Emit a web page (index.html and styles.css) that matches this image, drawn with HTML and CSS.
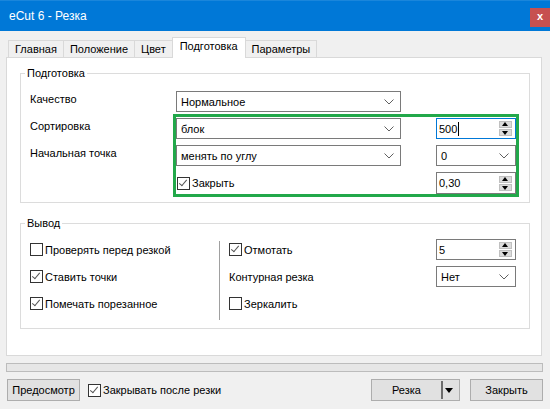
FILE: index.html
```html
<!DOCTYPE html>
<html lang="ru">
<head>
    <meta charset="UTF-8">
    <meta name="viewport" content="width=device-width, initial-scale=1.0">
    <title>eCut 6 - Резка</title>
    <link rel="stylesheet" href="styles.css">
</head>

<body>
    <div class="window">
        <div class="titlebar">
            <span class="title">eCut 6 - Резка</span>
            <div class="close">x</div>
        </div>

        <div class="content">
            <div class="tabs">
                <div class="tab">Главная</div>
                <div class="tab">Положение</div>
                <div class="tab">Цвет</div>
                <div class="tab active">Подготовка</div>
                <div class="tab">Параметры</div>
            </div>

            <div class="panel">
                <fieldset class="group prep">
                    <legend>Подготовка</legend>
                    <div class="prep-grid">
                        <div class="label">Качество</div>
                        <div class="combo wide"><span>Нормальное</span><svg class="chev" width="10" height="6" viewBox="0 0 10 6"><polyline points="0.5,0.5 5,5 9.5,0.5" fill="none" stroke="#606060" stroke-width="1"/></svg></div>
                        <div></div>

                        <div class="label">Сортировка</div>
                        <div class="combo wide"><span>блок</span><svg class="chev" width="10" height="6" viewBox="0 0 10 6"><polyline points="0.5,0.5 5,5 9.5,0.5" fill="none" stroke="#606060" stroke-width="1"/></svg></div>
                        <div class="spin focus"><span>500<i class="caret"></i></span><div class="spin-btns"><div class="up"></div><div class="down"></div></div></div>

                        <div class="label">Начальная точка</div>
                        <div class="combo wide"><span>менять по углу</span><svg class="chev" width="10" height="6" viewBox="0 0 10 6"><polyline points="0.5,0.5 5,5 9.5,0.5" fill="none" stroke="#606060" stroke-width="1"/></svg></div>
                        <div class="combo small"><span>0</span><svg class="chev" width="10" height="6" viewBox="0 0 10 6"><polyline points="0.5,0.5 5,5 9.5,0.5" fill="none" stroke="#606060" stroke-width="1"/></svg></div>

                        <div></div>
                        <label class="check"><span class="box on"></span>Закрыть</label>
                        <div class="spin"><span>0,30</span><div class="spin-btns"><div class="up"></div><div class="down"></div></div></div>
                    </div>
                    <div class="highlight"></div>
                </fieldset>

                <fieldset class="group output">
                    <legend>Вывод</legend>
                    <div class="out-cols">
                        <div class="col-left">
                            <label class="check"><span class="box"></span>Проверять перед резкой</label>
                            <label class="check"><span class="box on"></span>Ставить точки</label>
                            <label class="check"><span class="box on"></span>Помечать порезанное</label>
                        </div>
                        <div class="sep"></div>
                        <div class="col-right">
                            <div class="out-row">
                                <label class="check"><span class="box on"></span>Отмотать</label>
                                <div class="spin"><span>5</span><div class="spin-btns"><div class="up"></div><div class="down"></div></div></div>
                            </div>
                            <div class="out-row">
                                <div class="label">Контурная резка</div>
                                <div class="combo small"><span>Нет</span><svg class="chev" width="10" height="6" viewBox="0 0 10 6"><polyline points="0.5,0.5 5,5 9.5,0.5" fill="none" stroke="#606060" stroke-width="1"/></svg></div>
                            </div>
                            <div class="out-row">
                                <label class="check"><span class="box"></span>Зеркалить</label>
                            </div>
                        </div>
                    </div>
                </fieldset>
            </div>

            <div class="progress"></div>

            <div class="footer">
                <button class="btn preview">Предосмотр</button>
                <label class="check"><span class="box on"></span>Закрывать после резки</label>
                <div class="footer-right">
                    <button class="btn split"><span class="split-text">Резка</span><span class="split-line"></span><span class="split-arrow"></span></button>
                    <button class="btn close-btn">Закрыть</button>
                </div>
            </div>
        </div>
    </div>
</body>
</html>
```

FILE: styles.css
```css
*, *:before, *:after {
    box-sizing: border-box;
}

body {
    margin: 0;
    background-color: #f0f0f0;
    font-family: "Liberation Sans", Arial, sans-serif;
    font-size: 11px;
    color: #000;
}

.window {
    width: 550px;
    height: 409px;
    overflow: hidden;
}

.titlebar {
    height: 31px;
    background-color: #0078d7;
    border-top: 1px solid #1a86db;
    display: flex;
    align-items: flex-start;
    color: #fff;
}

.title {
    margin: 7px 0 0 9px;
    font-size: 12px;
    line-height: 16px;
}

.close {
    margin: 7px 0 0 auto;
    width: 20px;
    height: 19px;
    background-color: #c75050;
    color: #fff;
    font-weight: bold;
    font-size: 11px;
    line-height: 17px;
    text-align: center;
}

.content {
    padding: 0 8px 0 6px;
}

/* tabs */
.tabs {
    display: flex;
    align-items: flex-end;
    height: 26px;
    padding-left: 2px;
    position: relative;
    z-index: 1;
}

.tab {
    height: 17px;
    padding: 0 6px;
    border: 1px solid #d9d9d9;
    border-bottom: none;
    border-right: none;
    line-height: 17px;
    background-color: #f0f0f0;
}

.tab:last-child {
    border-right: 1px solid #d9d9d9;
}

.tab.active {
    height: 21px;
    margin-bottom: -1px;
    background-color: #fff;
    border-right: 1px solid #d9d9d9;
    line-height: 17px;
    padding: 0 7px;
}

.tab.active + .tab {
    border-left: none;
}

.panel {
    height: 299px;
    background-color: #fff;
    border: 1px solid #d9d9d9;
    padding: 8px 11px 0 13px;
}

/* groups */
.group {
    position: relative;
    margin: 0;
    border: 1px solid #dcdcdc;
    padding: 11px 13px 9px 9px;
}

.group legend {
    padding: 0 2px;
    margin-left: -5px;
    line-height: 14px;
}

.output {
    margin-top: 13px;
    padding: 9px 13px 8px 9px;
}

.prep-grid {
    display: grid;
    grid-template-columns: 111px 225px 80px;
    grid-auto-rows: 21px;
    column-gap: 35px;
    row-gap: 6px;
}

.prep-grid > :nth-last-child(-n+3) {
    height: 22px;
}

.label {
    display: flex;
    align-items: center;
    height: 21px;
    white-space: nowrap;
}

.prep-grid .label {
    align-items: flex-start;
    padding-top: 2px;
}

.combo {
    height: 21px;
    border: 1px solid #7a7a7a;
    background-color: #fff;
    display: flex;
    align-items: center;
    justify-content: space-between;
    padding: 0 6px 0 4px;
}

.combo.small {
    width: 80px;
}

.spin {
    height: 21px;
    width: 80px;
    border: 1px solid #7a7a7a;
    background-color: #fff;
    display: flex;
    align-items: center;
    justify-content: space-between;
    padding: 0 3px 0 2px;
}

.spin.focus {
    border-color: #0078d7;
}

.caret {
    display: inline-block;
    width: 1px;
    height: 14px;
    margin-left: 1px;
    background-color: #000;
    vertical-align: -3px;
}

.spin-btns {
    display: flex;
    flex-direction: column;
    gap: 1px;
}

.spin-btns div {
    width: 13px;
    height: 7px;
    background-color: #dcdcdc;
    border: 1px solid #c0c0c0;
    position: relative;
}

.spin-btns div:after {
    content: "";
    position: absolute;
    left: 2px;
    width: 0;
    height: 0;
    border-left: 3.5px solid transparent;
    border-right: 3.5px solid transparent;
}

.spin-btns .up:after {
    top: 0;
    border-bottom: 4px solid #000;
}

.spin-btns .down:after {
    top: 1px;
    border-top: 4px solid #000;
}

/* checkbox */
.check {
    display: flex;
    align-items: center;
    height: 21px;
    white-space: nowrap;
    gap: 2px;
}

.box {
    width: 13px;
    height: 13px;
    border: 1px solid #333;
    background-color: #fff;
    position: relative;
}

.box.on:after {
    content: "";
    position: absolute;
    left: 3px;
    top: 0px;
    width: 4px;
    height: 8px;
    border-right: 1px solid #555;
    border-bottom: 1px solid #555;
    transform: rotate(40deg);
}

.prep-grid .check {
    margin-left: 1px;
}

.highlight {
    position: absolute;
    left: 152px;
    top: 34px;
    width: 346px;
    height: 83px;
    border: 3px solid #22a84a;
    pointer-events: none;
}

/* output group */
.out-cols {
    display: flex;
}

.col-left {
    width: 189px;
    display: flex;
    flex-direction: column;
    gap: 6px;
}

.sep {
    width: 1px;
    height: 79px;
    margin-top: 2px;
    background-color: #a0a0a0;
}

.col-right {
    flex: 1;
    padding-left: 9px;
    display: flex;
    flex-direction: column;
    gap: 6px;
}

.out-row {
    display: flex;
    justify-content: space-between;
    height: 21px;
}

/* progress and footer */
.progress {
    margin-top: 7px;
    height: 9px;
    width: 537px;
    background-color: #e6e6e6;
    border: 1px solid #bcbcbc;
}

.footer {
    display: flex;
    align-items: center;
    margin-top: 7px;
    padding-left: 1px;
}

.btn {
    height: 22px;
    font-family: inherit;
    font-size: 11px;
    color: #000;
    background-color: #e1e1e1;
    border: 1px solid #adadad;
    padding: 0;
}

.preview {
    width: 73px;
}

.footer .check {
    margin-left: 8px;
}

.footer-right {
    margin-left: auto;
    display: flex;
    gap: 10px;
    margin-right: -1px;
}

.split {
    width: 89px;
    display: flex;
    align-items: center;
}

.split-text {
    flex: 1;
    text-align: center;
}

.split-line {
    width: 2px;
    height: 18px;
    background-color: #6d6d6d;
}

.split-arrow {
    width: 0;
    height: 0;
    margin: 0 6px 0 2px;
    border-left: 4px solid transparent;
    border-right: 4px solid transparent;
    border-top: 5px solid #000;
}

.close-btn {
    width: 73px;
}
```
